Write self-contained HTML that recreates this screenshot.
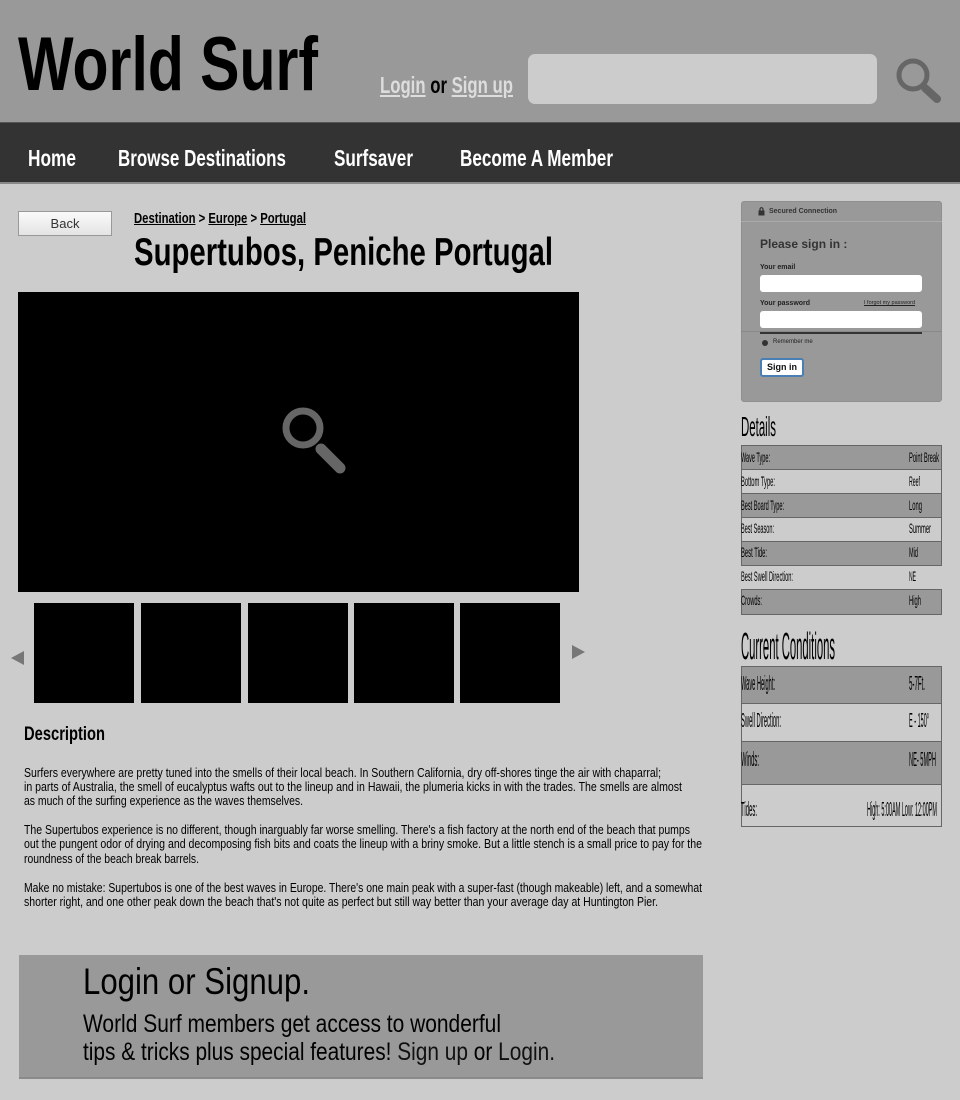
<!DOCTYPE html>
<html><head><meta charset="utf-8">
<style>
*{margin:0;padding:0;box-sizing:border-box}
body{width:960px;height:1100px;background:#ccc;font-family:"Liberation Sans",sans-serif;position:relative;overflow:hidden;color:#000}
.a{position:absolute}
.fit{position:absolute;white-space:nowrap}
.fit>span{display:inline-block;transform-origin:0 50%}
.row{position:absolute;left:741px;width:201px;border:1px solid #666}
.d{background:#999}
.l{background:#ccc}
.th{width:100px;height:100px;background:#000;top:603px;position:absolute}
</style></head><body>
<div class="a" style="left:0;top:0;width:960px;height:122px;background:#999"></div>
<div class="a" style="left:0;top:122px;width:960px;height:62px;background:#333;border-top:1px solid #555;border-bottom:2px solid #888"></div>

<div class="fit" style="left:18px;top:22px;width:300px;font-size:76px;font-weight:bold;line-height:86px"><span>World Surf</span></div>
<div class="fit" style="left:380px;top:71px;width:133px;font-size:23px;font-weight:bold;line-height:28px"><span><u style="color:#ddd">Login</u> or <u style="color:#ddd">Sign up</u></span></div>
<div class="a" style="left:528px;top:54px;width:349px;height:50px;background:#ccc;border-radius:7px"></div>
<svg class="a" style="left:880px;top:50px" width="70" height="60"><circle cx="33" cy="25" r="14" fill="none" stroke="#666" stroke-width="5"/><line x1="45" y1="38" x2="57" y2="49" stroke="#666" stroke-width="8" stroke-linecap="round"/></svg>

<div class="fit" style="left:28px;top:144px;width:48px;font-size:23px;font-weight:bold;color:#fff;line-height:28px"><span>Home</span></div>
<div class="fit" style="left:118px;top:144px;width:168px;font-size:23px;font-weight:bold;color:#fff;line-height:28px"><span>Browse Destinations</span></div>
<div class="fit" style="left:334px;top:144px;width:79px;font-size:23px;font-weight:bold;color:#fff;line-height:28px"><span>Surfsaver</span></div>
<div class="fit" style="left:460px;top:144px;width:153px;font-size:23px;font-weight:bold;color:#fff;line-height:28px"><span>Become A Member</span></div>

<div class="a" style="left:18px;top:211px;width:94px;height:25px;border:1px solid #999;background:linear-gradient(#fafafa,#e4e4e4);font-size:13px;color:#333;text-align:center;line-height:23px">Back</div>
<div class="fit" style="left:134px;top:210px;width:172px;font-size:15px;font-weight:bold;line-height:18px"><span><u>Destination</u> &gt; <u>Europe</u> &gt; <u>Portugal</u></span></div>
<div class="fit" style="left:134px;top:231px;width:419px;font-size:39px;font-weight:bold;line-height:44px"><span>Supertubos, Peniche Portugal</span></div>

<div class="a" style="left:18px;top:292px;width:561px;height:300px;background:#000"></div>
<svg class="a" style="left:270px;top:395px" width="90" height="90"><circle cx="33" cy="33" r="17" fill="none" stroke="#666" stroke-width="7"/><line x1="51" y1="54" x2="70" y2="73" stroke="#666" stroke-width="11" stroke-linecap="round"/></svg>

<div class="th" style="left:34px"></div>
<div class="th" style="left:141px"></div>
<div class="th" style="left:248px"></div>
<div class="th" style="left:354px"></div>
<div class="th" style="left:460px"></div>
<svg class="a" style="left:10px;top:650px" width="16" height="16"><polygon points="14,1 14,15 1,8" fill="#777"/></svg>
<svg class="a" style="left:571px;top:644px" width="16" height="16"><polygon points="1,1 1,15 14,8" fill="#777"/></svg>

<div class="fit" style="left:24px;top:723px;width:81px;font-size:19px;font-weight:bold;line-height:23px"><span>Description</span></div>
<div style="font-size:13px;line-height:14px">
<div class="fit" style="left:24px;top:766px;width:637px"><span>Surfers everywhere are pretty tuned into the smells of their local beach. In Southern California, dry off-shores tinge the air with chaparral;</span></div>
<div class="fit" style="left:24px;top:780px;width:658px"><span>in parts of Australia, the smell of eucalyptus wafts out to the lineup and in Hawaii, the plumeria kicks in with the trades. The smells are almost</span></div>
<div class="fit" style="left:24px;top:794px;width:279px"><span>as much of the surfing experience as the waves themselves.</span></div>
<div class="fit" style="left:24px;top:823px;width:666px"><span>The Supertubos experience is no different, though inarguably far worse smelling. There's a fish factory at the north end of the beach that pumps</span></div>
<div class="fit" style="left:24px;top:837px;width:678px"><span>out the pungent odor of drying and decomposing fish bits and coats the lineup with a briny smoke. But a little stench is a small price to pay for the</span></div>
<div class="fit" style="left:24px;top:852px;width:175px"><span>roundness of the beach break barrels.</span></div>
<div class="fit" style="left:24px;top:881px;width:678px"><span>Make no mistake: Supertubos is one of the best waves in Europe. There's one main peak with a super-fast (though makeable) left, and a somewhat</span></div>
<div class="fit" style="left:24px;top:895px;width:634px"><span>shorter right, and one other peak down the beach that's not quite as perfect but still way better than your average day at Huntington Pier.</span></div>
</div>

<div class="a" style="left:19px;top:955px;width:684px;height:124px;background:#999;border-bottom:2px solid #8a8a8a"></div>
<div class="fit" style="left:83px;top:961px;width:227px;font-size:37px;line-height:42px"><span>Login or Signup.</span></div>
<div class="fit" style="left:83px;top:1009px;width:418px;font-size:25px;line-height:30px"><span>World Surf members get access to wonderful</span></div>
<div class="fit" style="left:83px;top:1037px;width:472px;font-size:25px;line-height:30px"><span>tips &amp; tricks plus special features! <span style="color:#111">Sign up</span> or <span style="color:#111">Login.</span></span></div>

<!-- sign in panel -->
<div class="a" style="left:741px;top:201px;width:201px;height:201px;background:#999;border-radius:3px;border:1px solid #8f8f8f"></div>
<div class="a" style="left:741px;top:221px;width:201px;height:1px;background:#aaa"></div>
<div class="a" style="left:741px;top:331px;width:201px;height:1px;background:#888"></div>
<svg class="a" style="left:758px;top:207px" width="8" height="9"><rect x="0.5" y="3.5" width="6" height="5" fill="#333"/><path d="M2 4V2.2a1.5 1.5 0 0 1 3 0V4" fill="none" stroke="#333" stroke-width="1.2"/></svg>
<div class="a" style="left:769px;top:208px;font-size:7px;font-weight:bold;color:#333">Secured Connection</div>
<div class="a" style="left:760px;top:237px;font-size:12px;font-weight:bold;color:#333">Please sign in :</div>
<div class="a" style="left:760px;top:264px;font-size:7px;font-weight:bold;color:#222">Your email</div>
<div class="a" style="left:760px;top:275px;width:162px;height:17px;background:#fff;border-radius:3px"></div>
<div class="a" style="left:760px;top:300px;font-size:7px;font-weight:bold;color:#222">Your password</div>
<div class="a" style="left:864px;top:300px;font-size:5.5px;color:#222;text-decoration:underline">I forgot my password</div>
<div class="a" style="left:760px;top:311px;width:162px;height:17px;background:#fff;border-radius:3px"></div>
<div class="a" style="left:760px;top:332px;width:162px;height:2px;background:#333"></div>
<div class="a" style="left:762px;top:340px;width:6px;height:6px;border-radius:50%;background:#333"></div>
<div class="a" style="left:773px;top:339px;font-size:6px;color:#222">Remember me</div>
<div class="a" style="left:760px;top:358px;width:44px;height:19px;background:#fff;border:2px solid #4a7fb5;border-radius:3px;font-size:9px;font-weight:bold;text-align:center;line-height:15px;color:#111">Sign in</div>

<!-- details -->
<div class="fit" style="left:741px;top:411px;width:35px;font-size:28px;line-height:32px"><span>Details</span></div>
<div class="row d" style="top:445px;height:25px"></div>
<div class="row l" style="top:469px;height:25px"></div>
<div class="row d" style="top:493px;height:25px"></div>
<div class="row l" style="top:517px;height:25px"></div>
<div class="row d" style="top:541px;height:25px"></div>
<div class="row d" style="top:589px;height:26px"></div>
<div style="font-size:14px;line-height:16px">
<div class="fit" style="left:741px;top:449px;width:29px"><span>Wave Type:</span></div>
<div class="fit" style="left:909px;top:449px;width:30px"><span>Point Break</span></div>
<div class="fit" style="left:741px;top:473px;width:34px"><span>Bottom Type:</span></div>
<div class="fit" style="left:909px;top:473px;width:11px"><span>Reef</span></div>
<div class="fit" style="left:741px;top:497px;width:43px"><span>Best Board Type:</span></div>
<div class="fit" style="left:909px;top:497px;width:13px"><span>Long</span></div>
<div class="fit" style="left:741px;top:520px;width:33px"><span>Best Season:</span></div>
<div class="fit" style="left:909px;top:520px;width:22px"><span>Summer</span></div>
<div class="fit" style="left:741px;top:544px;width:26px"><span>Best Tide:</span></div>
<div class="fit" style="left:909px;top:544px;width:9px"><span>Mid</span></div>
<div class="fit" style="left:741px;top:568px;width:52px"><span>Best Swell Direction:</span></div>
<div class="fit" style="left:909px;top:568px;width:7px"><span>NE</span></div>
<div class="fit" style="left:741px;top:592px;width:21px"><span>Crowds:</span></div>
<div class="fit" style="left:909px;top:592px;width:12px"><span>High</span></div>
</div>

<div class="fit" style="left:741px;top:626px;width:94px;font-size:38px;line-height:42px"><span>Current Conditions</span></div>
<div class="row d" style="top:666px;height:38px"></div>
<div class="row l" style="top:703px;height:39px"></div>
<div class="row d" style="top:741px;height:44px"></div>
<div class="row l" style="top:784px;height:43px"></div>
<div style="font-size:20px;line-height:22px">
<div class="fit" style="left:741px;top:673px;width:34px"><span>Wave Height:</span></div>
<div class="fit" style="left:909px;top:673px;width:16px"><span>5-7Ft.</span></div>
<div class="fit" style="left:741px;top:710px;width:40px"><span>Swell Direction:</span></div>
<div class="fit" style="left:909px;top:710px;width:20px"><span>E - 150°</span></div>
<div class="fit" style="left:741px;top:749px;width:18px"><span>Winds:</span></div>
<div class="fit" style="left:909px;top:749px;width:27px"><span>NE- 5MPH</span></div>
<div class="fit" style="left:741px;top:799px;width:16px"><span>Tides:</span></div>
<div class="fit" style="left:867px;top:799px;width:70px"><span>High: 5:00AM Low: 12:00PM</span></div>
</div>

<script>
document.querySelectorAll('.fit').forEach(function(el){
  var s=el.firstElementChild; var w=parseFloat(el.style.width);
  var n=s.getBoundingClientRect().width;
  if(n>0&&w>0){s.style.transform='scaleX('+(w/n)+')';}
});
</script>
</body></html>
